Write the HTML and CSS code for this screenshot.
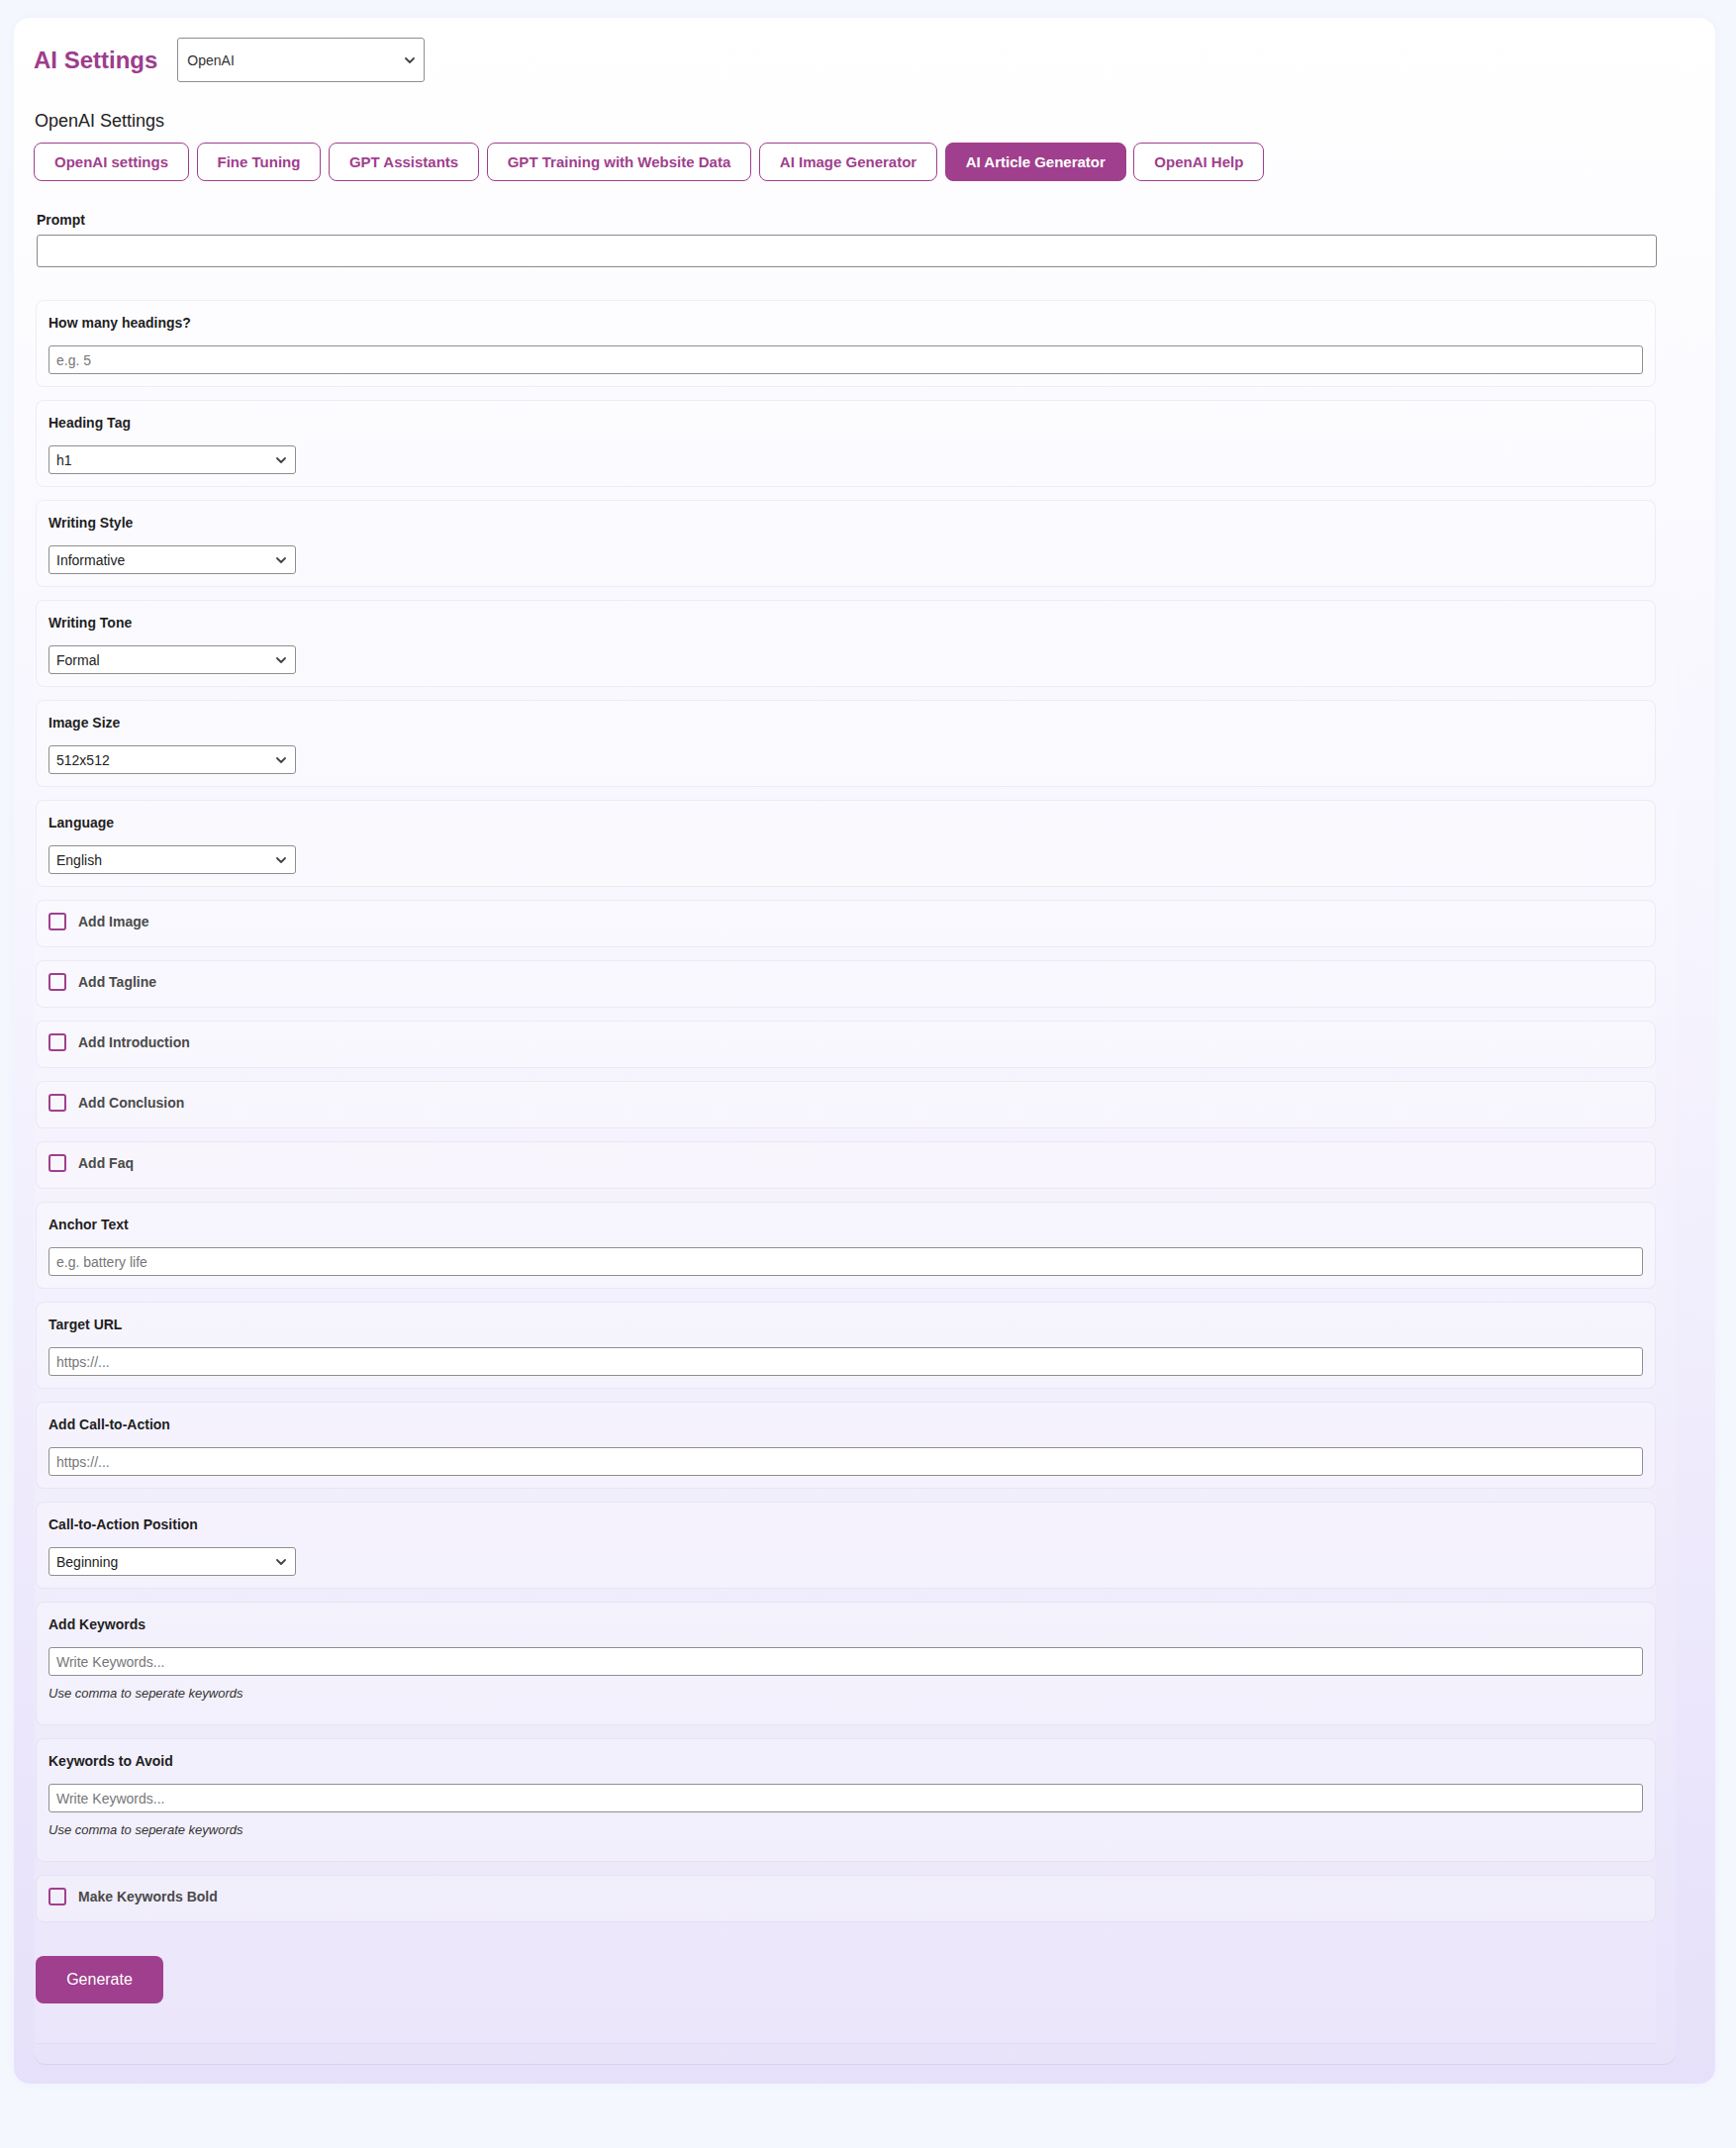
FILE: index.html
```html
<!DOCTYPE html>
<html lang="en">
<head>
  <meta charset="UTF-8" />
  <meta name="viewport" content="width=device-width, initial-scale=1.0" />
  <title>AI Settings</title>
  <link rel="stylesheet" href="styles.css">
</head>
<body>
  <div class="settings-box">
    <div class="settings-head">
      <h1>AI Settings</h1>
      <div class="select-wrap provider">
        <select>
          <option>OpenAI</option>
        </select>
        <svg class="chevron" viewBox="0 0 10 6"><path d="M1 1l4 4 4-4" /></svg>
      </div>
    </div>

    <div class="panel">
      <h2>OpenAI Settings</h2>
      <div class="tabs">
        <a class="tab">OpenAI settings</a>
        <a class="tab">Fine Tuning</a>
        <a class="tab">GPT Assistants</a>
        <a class="tab">GPT Training with Website Data</a>
        <a class="tab">AI Image Generator</a>
        <a class="tab active">AI Article Generator</a>
        <a class="tab">OpenAI Help</a>
      </div>

      <form class="article-form">
        <div class="prompt">
          <label>Prompt</label>
          <input type="text" class="prompt-input">
        </div>

        <div class="field">
          <label>How many headings?</label>
          <input type="text" placeholder="e.g. 5">
        </div>

        <div class="field">
          <label>Heading Tag</label>
          <div class="select-wrap">
            <select><option>h1</option><option>h2</option><option>h3</option></select>
            <svg class="chevron" viewBox="0 0 10 6"><path d="M1 1l4 4 4-4" /></svg>
          </div>
        </div>

        <div class="field">
          <label>Writing Style</label>
          <div class="select-wrap">
            <select><option>Informative</option></select>
            <svg class="chevron" viewBox="0 0 10 6"><path d="M1 1l4 4 4-4" /></svg>
          </div>
        </div>

        <div class="field">
          <label>Writing Tone</label>
          <div class="select-wrap">
            <select><option>Formal</option></select>
            <svg class="chevron" viewBox="0 0 10 6"><path d="M1 1l4 4 4-4" /></svg>
          </div>
        </div>

        <div class="field">
          <label>Image Size</label>
          <div class="select-wrap">
            <select><option>512x512</option></select>
            <svg class="chevron" viewBox="0 0 10 6"><path d="M1 1l4 4 4-4" /></svg>
          </div>
        </div>

        <div class="field">
          <label>Language</label>
          <div class="select-wrap">
            <select><option>English</option></select>
            <svg class="chevron" viewBox="0 0 10 6"><path d="M1 1l4 4 4-4" /></svg>
          </div>
        </div>

        <div class="field check">
          <label><input type="checkbox"><span>Add Image</span></label>
        </div>
        <div class="field check">
          <label><input type="checkbox"><span>Add Tagline</span></label>
        </div>
        <div class="field check">
          <label><input type="checkbox"><span>Add Introduction</span></label>
        </div>
        <div class="field check">
          <label><input type="checkbox"><span>Add Conclusion</span></label>
        </div>
        <div class="field check">
          <label><input type="checkbox"><span>Add Faq</span></label>
        </div>

        <div class="field">
          <label>Anchor Text</label>
          <input type="text" placeholder="e.g. battery life">
        </div>

        <div class="field">
          <label>Target URL</label>
          <input type="text" placeholder="https://...">
        </div>

        <div class="field">
          <label>Add Call-to-Action</label>
          <input type="text" placeholder="https://...">
        </div>

        <div class="field">
          <label>Call-to-Action Position</label>
          <div class="select-wrap">
            <select><option>Beginning</option><option>End</option></select>
            <svg class="chevron" viewBox="0 0 10 6"><path d="M1 1l4 4 4-4" /></svg>
          </div>
        </div>

        <div class="field">
          <label>Add Keywords</label>
          <input type="text" placeholder="Write Keywords...">
          <p class="hint">Use comma to seperate keywords</p>
        </div>

        <div class="field">
          <label>Keywords to Avoid</label>
          <input type="text" placeholder="Write Keywords...">
          <p class="hint">Use comma to seperate keywords</p>
        </div>

        <div class="field check">
          <label><input type="checkbox"><span>Make Keywords Bold</span></label>
        </div>

        <button type="submit" class="generate">Generate</button>
      </form>
    </div>
  </div>
</body>
</html>
```

FILE: styles.css
```css
* {
  margin: 0;
  padding: 0;
  box-sizing: border-box;
  font-family: 'Liberation Sans', Arial, sans-serif;
}

body {
  background: #f4f7fe;
  min-height: 100vh;
  padding: 18px 21px 65px 14px;
}

.settings-box {
  padding: 20px;
  border-radius: 16px;
  background: linear-gradient(180deg, #ffffff 0%, #f6f4fe 45%, #e6e0fa 100%);
  box-shadow: 0 0 8px rgba(90, 80, 160, 0.04);
}

.settings-head {
  display: flex;
  align-items: center;
  gap: 20px;
  margin-bottom: 29px;
}

.settings-head h1 {
  font-size: 24px;
  font-weight: 700;
  color: #9e3c8c;
}

.select-wrap {
  position: relative;
  width: 250px;
}

.select-wrap select {
  appearance: none;
  -webkit-appearance: none;
  width: 100%;
  height: 29px;
  padding: 0 28px 0 7px;
  border: 1px solid #8f8f8f;
  border-radius: 3px;
  background: #fff;
  font-size: 14px;
  color: #222;
  outline: none;
}

.select-wrap.provider select {
  height: 45px;
  padding-left: 9px;
  color: #333;
}

.chevron {
  position: absolute;
  right: 10px;
  top: 50%;
  width: 10px;
  height: 6px;
  transform: translateY(-50%);
  pointer-events: none;
}

.chevron path {
  fill: none;
  stroke: #444;
  stroke-width: 1.8;
  stroke-linecap: round;
  stroke-linejoin: round;
}

.panel {
  margin-right: 20px;
  padding: 0 20px 20px 0;
  border-radius: 0 0 12px 12px;
  background: rgba(255, 255, 255, 0.12);
  box-shadow: 0 1px 0 rgba(150, 140, 210, 0.18);
}

.panel h2 {
  font-size: 18px;
  font-weight: 400;
  line-height: 21px;
  color: #222;
  padding-left: 1px;
  margin-bottom: 11px;
}

.tabs {
  display: flex;
  flex-wrap: wrap;
  gap: 7.5px;
}

.tab {
  padding: 10px 20px;
  border: 1px solid #a03f8d;
  border-radius: 8px;
  background: #fff;
  color: #a03f8d;
  font-size: 15px;
  font-weight: 700;
  line-height: 17px;
  cursor: pointer;
}

.tab.active {
  background: #a03f8d;
  color: #fff;
}

.article-form {
  display: flex;
  flex-direction: column;
  align-items: flex-start;
  gap: 13px;
  margin: 31px 0 0 2px;
  padding-bottom: 40px;
  background: rgba(255, 255, 255, 0.1);
  border-bottom: 1px solid rgba(140, 130, 200, 0.1);
}

.prompt {
  width: 100%;
  margin-bottom: 20px;
}

.prompt label,
.field > label {
  display: block;
  font-size: 14px;
  font-weight: 700;
  line-height: 17px;
  color: #1f1f1f;
}

.prompt label {
  margin: 0 0 6px 1px;
}

.prompt-input {
  display: block;
  width: 100%;
  height: 33px;
  margin-left: 1px;
  border: 1px solid #8a8a8a;
  border-radius: 3px;
  background: #fff;
  outline: none;
}

.field {
  width: 100%;
  padding: 14px 12px 12px;
  border: 1px solid rgba(120, 110, 170, 0.1);
  border-radius: 8px;
  background: rgba(255, 255, 255, 0.28);
}

.field > label {
  margin-bottom: 14px;
}

.field input[type="text"] {
  display: block;
  width: 100%;
  height: 29px;
  padding: 0 7px;
  border: 1px solid #8f8f8f;
  border-radius: 3px;
  background: #fff;
  font-size: 14px;
  color: #222;
  outline: none;
}

.field input::placeholder {
  color: #777;
}

.hint {
  margin: 10px 0 12px;
  font-size: 13px;
  font-style: italic;
  line-height: 15px;
  color: #333;
}

.field.check {
  padding: 12px 12px 16px;
}

.field.check label {
  display: flex;
  align-items: center;
  gap: 12px;
  margin: 0;
  color: #4a4a4a;
  line-height: 18px;
}

.field.check input {
  appearance: none;
  -webkit-appearance: none;
  width: 18px;
  height: 18px;
  border: 2px solid #a03f8d;
  border-radius: 3px;
  background: transparent;
}

.generate {
  width: 129px;
  height: 48px;
  margin-top: 21px;
  border: none;
  border-radius: 8px;
  background: #a03f8d;
  color: #fff;
  font-size: 16px;
  cursor: pointer;
}

.generate:hover {
  background: #8c3479;
}
```
